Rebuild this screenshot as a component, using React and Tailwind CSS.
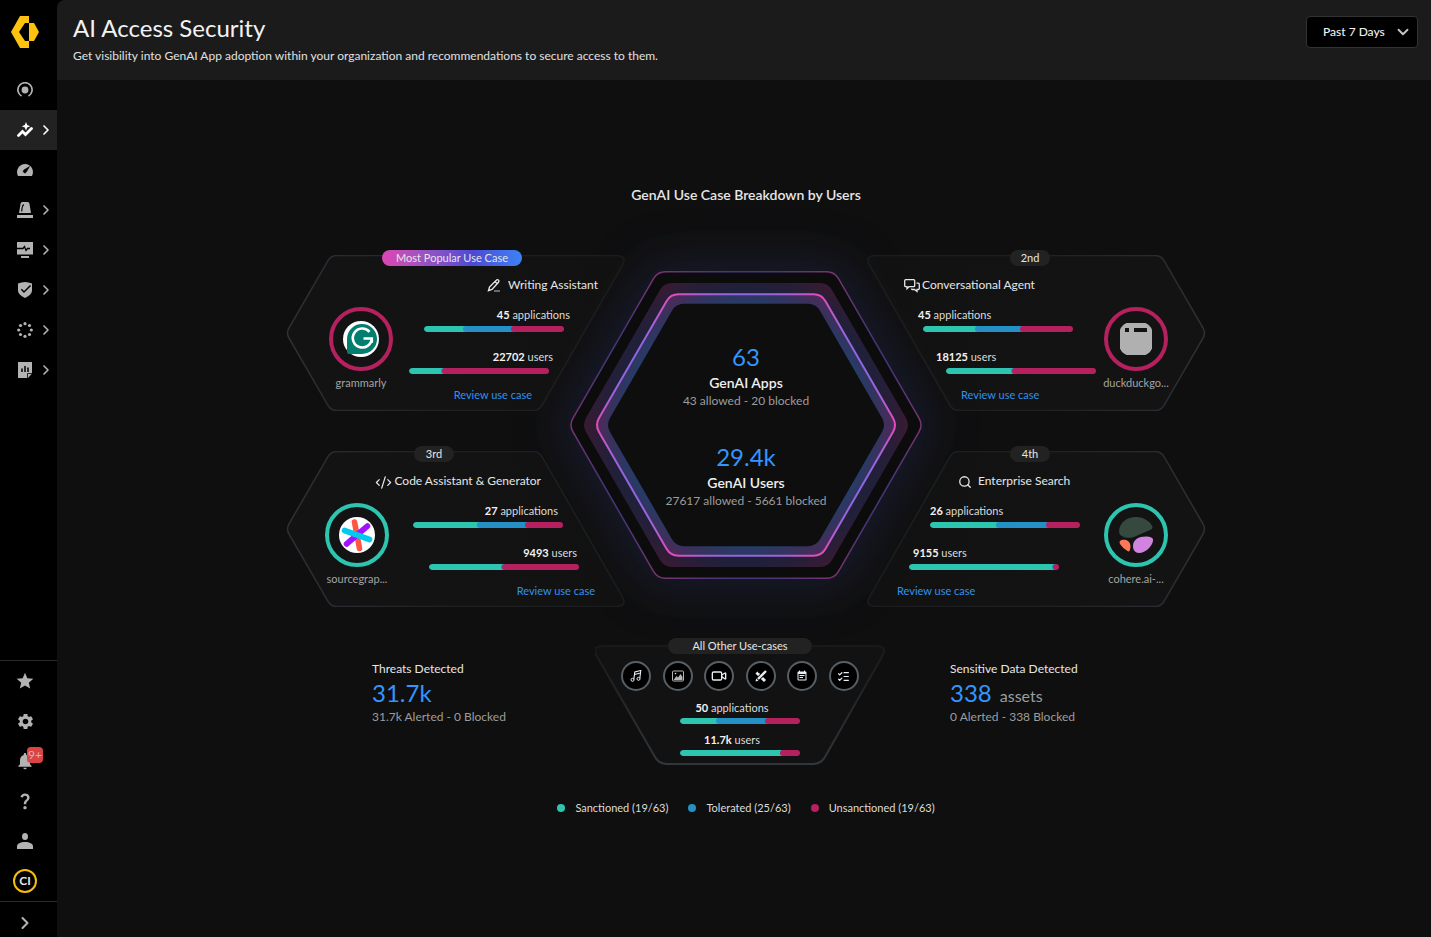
import React, { useState } from "react";
import {
  MdStar,
  MdSettings,
  MdNotifications,
  MdQuestionMark,
  MdEventNote,
} from "react-icons/md";
import {
  ChevronRight,
  ChevronDown,
  CodeXml,
  Search,
  Video,
  ListChecks,
} from "lucide-react";

/* ---------- Sidebar icons ---------- */

const Logo = () => (
  <svg className="w-7 h-8" viewBox="0 0 28 32" fill="#ffc20e">
    <path d="M9 0h9v7h-4L8 16l6 9h4v7H9L0 16z" />
    <path d="M18 7h5l5 9-5 9h-5z" />
  </svg>
);

const RadarIcon = () => (
  <svg className="w-4 h-4" viewBox="0 0 16 16">
    <circle cx="8" cy="8" r="3.4" fill="currentColor" />
    <path d="M4.500 14a7.100 7.100 0 1 1 7 0" fill="none" stroke="currentColor" strokeWidth="1.700" />
  </svg>
);

const InsightsIcon = () => (
  <svg className="w-4 h-4" viewBox="0 0 16 16">
    <path d="M1.500 13.500l4-4 3 3 6-6" fill="none" stroke="currentColor" strokeWidth="2.800" strokeLinecap="round" />
    <path d="M9 0l1.200 3 3 1.200-3 1.200L9 8.400l-1.200-3-3-1.200 3-1.200z" fill="currentColor" />
  </svg>
);

const GaugeIcon = () => (
  <svg className="w-4 h-4" viewBox="0 0 16 16">
    <path d="M8 2a8 8 0 0 0-7.200 11.400c.2.400.5.600 1 .6h12.400c.5 0 .8-.2 1-.6A8 8 0 0 0 8 2z" fill="currentColor" />
    <path d="M12.500 4.500L9.300 10a1.600 1.600 0 1 1-2.400-2z" fill="#000" stroke="#000" strokeWidth=".6" />
  </svg>
);

const AlarmIcon = () => (
  <svg className="w-4 h-4" viewBox="0 0 16 16" fill="currentColor">
    <path d="M2 11L3.500 2C3.700.700 4.300 0 5.500 0h5c1.200 0 1.800.700 2 2L14 11zM0 13h16v3H0z" />
    <path d="M4.800 9.500Q4.800 4 6.800 2.500" fill="none" stroke="#000" strokeWidth="1.100" />
  </svg>
);

const MonitorIcon = () => (
  <svg className="w-4 h-4" viewBox="0 0 16 16" fill="currentColor">
    <path d="M0 0h16v12.500H0zM4 14h8v2H4z" />
    <path d="M0 6.500h6l1.500-2 1.500 4 1.500-2H13" fill="none" stroke="#000" strokeWidth="1.300" />
  </svg>
);

const ShieldIcon = () => (
  <svg className="w-4 h-4" viewBox="0 0 16 16" fill="currentColor">
    <path d="M1 1.500q7-3 14 0v7q0 4-7 7.500-7-3.500-7-7.500z" />
    <path d="M4.300 7.200L7 10l6.500-6.500" fill="none" stroke="#000" strokeWidth="1.500" />
  </svg>
);

const RingIcon = () => (
  <svg className="w-4 h-4" viewBox="0 0 16 16" fill="currentColor">
    <circle cx="8" cy="1.700" r="1.600" />
    <circle cx="12.500" cy="3.500" r="1.600" />
    <circle cx="14.300" cy="8" r="1.600" />
    <circle cx="12.500" cy="12.500" r="1.600" />
    <circle cx="8" cy="14.300" r="1.600" />
    <circle cx="3.500" cy="12.500" r="1.600" />
    <circle cx="1.700" cy="8" r="1.600" />
    <circle cx="3.500" cy="3.500" r="1.600" />
  </svg>
);

const ReportIcon = () => (
  <svg className="w-4 h-4" viewBox="0 0 16 16" fill="currentColor">
    <path d="M1 0h14v11.500L11 16H1z" />
    <path d="M10.500 16v-4.500H15" fill="none" stroke="#000" strokeWidth=".8" />
    <path d="M5 6.500V10M8 4v6M11 5.500V10" stroke="#000" strokeWidth="1.500" />
  </svg>
);

const PersonIcon = () => (
  <svg className="w-4 h-4" viewBox="0 0 16 16" fill="currentColor">
    <ellipse cx="8" cy="3.500" rx="3" ry="3.500" />
    <path d="M0 16v-2.500C0 10.500 3.500 9 8 9s8 1.500 8 4.500V16z" />
  </svg>
);

/* ---------- Use case icons ---------- */

const PencilIcon = () => (
  <svg className="w-4 h-4" viewBox="0 0 16 16" fill="none" stroke="currentColor">
    <path d="M2.500 13.700l1-3.700L10.300 3.200a1.400 1.400 0 0 1 2.200 2L6 12.400z" strokeWidth="1.400" />
    <path d="M9 4.700l2.500 2" strokeWidth="1.400" />
    <path d="M8 14h6" strokeWidth="1.400" opacity=".6" />
  </svg>
);

const ChatIcon = () => (
  <svg className="w-4 h-4" viewBox="0 0 16 16" fill="none" stroke="currentColor" strokeWidth="1.300">
    <path d="M1.700 2.700h8q1 0 1 1v5q0 1-1 1H5L3 11.700v-2H1.700q-1 0-1-1v-5q0-1 1-1z" />
    <path d="M12.500 6.200h1.800q1 0 1 1v4.300q0 1-1 1H13v2l-2.500-2h-2q-1 0-1-1" />
  </svg>
);

const MusicIcon = () => (
  <svg className="w-3 h-3" viewBox="0 0 12 12" fill="none" stroke="currentColor">
    <path d="M3.800 9.500l1-7.500 6-1.500-1 8M4.500 4.500l6-1.500" strokeWidth="1.100" />
    <circle cx="2.500" cy="9.800" r="1.500" />
    <circle cx="8.500" cy="8.800" r="1.500" />
  </svg>
);

const PictureIcon = () => (
  <svg className="w-3 h-3" viewBox="0 0 12 12" fill="none" stroke="currentColor">
    <rect x=".5" y="1" width="11" height="10" rx="1" stroke="#b5b5b5" />
    <path d="M1.500 10l3-4L6 7.500 8.500 4l2 3v3z" fill="#b5b5b5" stroke="none" />
    <circle cx="3.500" cy="3.500" r=".8" fill="currentColor" stroke="none" />
  </svg>
);

const DesignIcon = () => (
  <svg className="w-3 h-3" viewBox="0 0 12 12" fill="none" stroke="currentColor">
    <path d="M1.500 2.500l8.500 8.500" strokeWidth="3" />
    <path d="M3 3l1-1M5 5l1-1M7.500 7.500l1-1" stroke="#000" strokeWidth=".7" />
    <path d="M11 1L2.500 9.500" stroke="#000" strokeWidth="4" />
    <path d="M11 1L3 9" strokeWidth="2.400" />
    <path d="M.500 11.500l.800-3 2.200 2.200z" fill="currentColor" stroke="none" />
  </svg>
);

/* ---------- App logos ---------- */

const GrammarlyLogo = () => (
  <svg className="w-9 h-9" viewBox="0 0 36 36">
    <circle cx="18" cy="18" r="18" fill="#fff" />
    <path d="M19 3A14.800 14.800 0 1 1 19 33H6q-2 0-2-2V18A15 15 0 0 1 19 3z" fill="#027e6f" />
    <path
      d="M26.500 10.800A9.500 9.500 0 1 0 28.800 17.500H20.500M28.800 17.500v4.300"
      fill="none"
      stroke="#fff"
      strokeWidth="2.600"
    />
  </svg>
);

const DuckLogo = () => (
  <svg className="w-8 h-8" viewBox="0 0 32 32">
    <path d="M6.500 0h19Q30 2 32 6.500v19Q30 30 25.500 32h-19Q2 30 0 25.500v-19Q2 2 6.500 0z" fill="#b0b0b0" />
    <path d="M5 5h4v4H5zM14 5h13v4H14z" fill="#121212" />
  </svg>
);

const SourcegraphLogo = () => (
  <svg className="w-9 h-9" viewBox="0 0 36 36">
    <circle cx="18" cy="18" r="18" fill="#fff" />
    <g fill="none" strokeWidth="5.600" strokeLinecap="round">
      <path d="M15.500 5l5 26.500" stroke="#ff5543" />
      <path d="M28.500 9L7.500 27" stroke="#a112ff" />
      <path d="M5.500 13.500l25 9" stroke="#00cbec" />
    </g>
  </svg>
);

const CohereLogo = () => (
  <svg className="w-9 h-9" viewBox="0 0 36 36">
    <path d="M1 14C2 5 9 0 18 0c8 0 15 5 16.500 10 .3 1.500-1 2.500-2.500 3l-15 6.500c-3 1.300-7 2-11 .5C2.500 19 1 17 1 14z" fill="#35493f" />
    <path d="M2 24c2-2 6-1.500 8 0 3 2 3 7 1.500 10-.8 1-2 0-3-.7C5 31 0 26 2 24z" fill="#ff7759" />
    <path d="M15 29c0-7 7-10 14-9.500 5 .3 6.500 2 6 4.500-1 5-7 12-14 12-4 0-6-3-6-7z" fill="#d084df" />
  </svg>
);

/* ---------- Shapes ---------- */

// closed polygon path with every corner rounded by its own radius
const roundedPath = (points) => {
  const n = points.length;
  const towards = (a, b, r) => {
    const len = Math.hypot(b[0] - a[0], b[1] - a[1]);
    return [a[0] + ((b[0] - a[0]) * r) / len, a[1] + ((b[1] - a[1]) * r) / len];
  };
  return (
    points
      .map((p, i) => {
        const start = towards(p, points[(i + n - 1) % n], p[2]);
        const end = towards(p, points[(i + 1) % n], p[2]);
        return `${i === 0 ? "M" : "L"}${start.join(" ")}Q${p[0]} ${p[1]} ${end.join(" ")}`;
      })
      .join("") + "Z"
  );
};

const cardPath = roundedPath([
  [0, 78, 6],
  [45, 0.5, 6],
  [342, 0.5, 12],
  [253, 155.5, 6],
  [45, 155.5, 6],
]);

const otherPath = roundedPath([
  [-4, 1, 12],
  [293, 1, 12],
  [226, 119, 8],
  [64, 119, 8],
]);

const hexPath = (r, corner) => {
  const h = r * 0.866;
  return roundedPath([
    [-r, 0, corner],
    [-r / 2, -h, corner],
    [r / 2, -h, corner],
    [r, 0, corner],
    [r / 2, h, corner],
    [-r / 2, h, corner],
  ]);
};

const CardShape = ({ flip }) => (
  <svg className={`absolute inset-0 w-full h-full ${flip}`} viewBox="0 0 340 156" fill="none">
    <defs>
      <linearGradient id="cardStroke" x1="0" y1="0" x2="1" y2="0">
        <stop offset="0" stopColor="#2c3136" />
        <stop offset=".5" stopColor="#1e2022" />
        <stop offset="1" stopColor="#1b1c1e" />
      </linearGradient>
      <linearGradient id="cardFill" x1="0" y1="0" x2="1" y2="0">
        <stop offset="0.4" stopColor="#131313" />
        <stop offset="1" stopColor="#131313" stopOpacity=".6" />
      </linearGradient>
    </defs>
    <path d={cardPath} fill="url(#cardFill)" stroke="url(#cardStroke)" strokeWidth="1.500" />
  </svg>
);

const Hexagon = () => (
  <svg
    className="absolute left-1/2 top-[-70px] w-[480px] h-[480px] -translate-x-1/2 overflow-visible"
    viewBox="-240 -240 480 480"
    fill="none"
  >
    <defs>
      <radialGradient id="hexLine" gradientUnits="userSpaceOnUse" cx="0" cy="0" r="152">
        <stop offset=".84" stopColor="#8069e4" />
        <stop offset=".9" stopColor="#a562d6" />
        <stop offset="1" stopColor="#ee48b4" />
      </radialGradient>
      <radialGradient id="hexOuter" gradientUnits="userSpaceOnUse" cx="0" cy="0" r="176">
        <stop offset=".86" stopColor="#41377a" />
        <stop offset="1" stopColor="#7d3270" />
      </radialGradient>
      <radialGradient id="hexBand" gradientUnits="userSpaceOnUse" cx="0" cy="0" r="164">
        <stop offset=".74" stopColor="#263c68" />
        <stop offset=".8" stopColor="#32345f" />
        <stop offset=".93" stopColor="#542757" />
      </radialGradient>
      <radialGradient id="hexBandOuter" gradientUnits="userSpaceOnUse" cx="0" cy="0" r="164">
        <stop offset=".84" stopColor="#20203a" />
        <stop offset="1" stopColor="#3b1a32" />
      </radialGradient>
      <filter id="glow" x="-50%" y="-50%" width="200%" height="200%">
        <feGaussianBlur stdDeviation="24" />
      </filter>
    </defs>
    <path d={hexPath(190, 10)} fill="#22264a" opacity=".5" filter="url(#glow)" />
    <path d={hexPath(177, 8)} fill="#0c0c0d" stroke="url(#hexOuter)" strokeWidth="1.500" />
    <path d={hexPath(164, 8)} fill="url(#hexBandOuter)" />
    <path d={hexPath(151, 8)} fill="url(#hexBand)" stroke="url(#hexLine)" strokeWidth="2" />
    <path d={hexPath(140, 8)} fill="#0e0e0e" />
  </svg>
);

const Bar = ({ parts, className }) => {
  const colors = ["bg-[#2dc5b0]", "bg-[#2490c5]", "bg-[#b5205f]"];
  const total = parts.reduce((a, b) => a + b, 0);

  return (
    <div className={`flex h-1.5 rounded-full overflow-hidden ${className}`}>
      {parts.map((part, i) => (
        <div
          key={i}
          className={`shrink-0 rounded-l-full ${colors[i]} ${i > 0 ? "-ml-[3px]" : ""}`}
          style={{ width: `calc(${(part / total) * 100}% + 3px)` }}
        />
      ))}
    </div>
  );
};

const Count = ({ value, unit, className }) => (
  <p className={`text-[11px] leading-4 text-[#dcdcdc] ${className}`}>
    <span className="font-bold text-[#f2f2f2]">{value}</span> {unit}
  </p>
);

/* ---------- Use case cards ---------- */

const useCases = [
  {
    rank: "Most Popular Use Case",
    badge: "w-[140px] left-24 bg-linear-to-r from-[#dc46b2] via-[#4b49d4] via-65% to-[#3b82f6]",
    title: "Writing Assistant",
    icon: <PencilIcon />,
    apps: "45",
    appParts: [39, 48, 53],
    users: "22702",
    userParts: [32, 1, 107],
    bar: "w-[140px]",
    app: "grammarly",
    logo: <GrammarlyLogo />,
    ring: "border-[#b5205f]",
    right: false,
    flip: "",
    avatar: "ml-[43px]",
    gaps: ["mr-7 gap-1.5", "mr-14", "mr-[62px]", "mr-[73px]", "mr-[77px]", "mr-[94px]"],
  },
  {
    rank: "2nd",
    badge: "w-10 left-36 bg-[#222]",
    title: "Conversational Agent",
    icon: <ChatIcon />,
    apps: "45",
    appParts: [52, 45, 53],
    users: "18125",
    userParts: [65, 1, 84],
    bar: "w-[150px]",
    app: "duckduckgo...",
    logo: <DuckLogo />,
    ring: "border-[#b5205f]",
    right: true,
    flip: "-scale-x-100",
    avatar: "mr-[38px]",
    gaps: ["ml-[38px] gap-0.5", "ml-[52px]", "ml-[57px]", "ml-[70px]", "ml-20", "ml-[95px]"],
  },
  {
    rank: "3rd",
    badge: "w-10 left-32 bg-[#222]",
    title: "Code Assistant & Generator",
    icon: <CodeXml className="mt-0.5" size={17} strokeWidth={1.8} />,
    apps: "27",
    appParts: [64, 48, 38],
    users: "9493",
    userParts: [72, 1, 77],
    bar: "w-[150px]",
    app: "sourcegrap...",
    logo: <SourcegraphLogo />,
    ring: "border-[#2dc5b0]",
    right: false,
    flip: "-scale-y-100",
    avatar: "ml-[39px]",
    gaps: ["mr-[85px] gap-0.5", "mr-[68px]", "mr-[63px]", "mr-[49px]", "mr-[47px]", "mr-[31px]"],
  },
  {
    rank: "4th",
    badge: "w-10 left-36 bg-[#222]",
    title: "Enterprise Search",
    icon: <Search className="mt-0.5" size={14} strokeWidth={2.2} />,
    apps: "26",
    appParts: [66, 50, 34],
    users: "9155",
    userParts: [143, 1, 6],
    bar: "w-[150px]",
    app: "cohere.ai-...",
    logo: <CohereLogo />,
    ring: "border-[#2dc5b0]",
    right: true,
    flip: "-scale-100",
    avatar: "mr-[38px]",
    gaps: ["ml-[92px] gap-1.5", "ml-16", "ml-16", "ml-[47px]", "ml-[43px]", "ml-[31px]"],
  },
];

const UseCaseCard = ({ item }) => {
  const [title, apps, appBar, users, userBar, link] = item.gaps;

  return (
    <section className="relative h-[156px]">
      <CardShape flip={item.flip} />
      <span
        className={`absolute -top-[5px] h-4 rounded-full text-center text-[11px] leading-4 text-[#e6e6e6] ${item.badge}`}
      >
        {item.rank}
      </span>

      <div className={`relative flex flex-col pt-5 ${item.right ? "items-start" : "items-end"}`}>
        <div className={`flex items-center h-5 text-[#e6e6e6] ${title}`}>
          {item.icon}
          <h3 className="text-[12px] leading-5">{item.title}</h3>
        </div>

        <div className={`mt-3 w-full flex ${item.right ? "flex-row-reverse" : ""}`}>
          <div className={`w-16 shrink-0 flex flex-col items-center ${item.avatar}`}>
            <div className={`w-16 h-16 rounded-full border-4 flex items-center justify-center ${item.ring}`}>
              {item.logo}
            </div>
            <p className="mt-1 text-[11px] leading-4 text-[#a3a3a3] whitespace-nowrap">{item.app}</p>
          </div>

          <div className={`flex-1 flex flex-col ${item.right ? "items-start" : "items-end"}`}>
            <Count value={item.apps} unit="applications" className={apps} />
            <Bar parts={item.appParts} className={`mt-[3px] ${item.bar} ${appBar}`} />
            <Count value={item.users} unit="users" className={`mt-[17px] ${users}`} />
            <Bar parts={item.userParts} className={`mt-[3px] ${item.bar} ${userBar}`} />
            <a href="#review" className={`mt-[13px] text-[11px] leading-4 text-[#3091ee] ${link}`}>
              Review use case
            </a>
          </div>
        </div>
      </div>
    </section>
  );
};

const CenterStat = ({ value, label, detail }) => (
  <div className="flex flex-col items-center whitespace-nowrap">
    <p className="text-2xl leading-8 text-[#3395ff]">{value}</p>
    <p className="text-[14px] leading-5 font-semibold text-[#f0f0f0]">{label}</p>
    <p className="text-[12px] leading-4 text-[#9d9d9d]">{detail}</p>
  </div>
);

const otherIcons = [
  <MusicIcon />,
  <PictureIcon />,
  <Video size={16} strokeWidth={2} />,
  <DesignIcon />,
  <MdEventNote size={12} />,
  <ListChecks size={13} strokeWidth={2.2} />,
];

const OtherUseCases = () => (
  <section className="relative w-[290px] h-[120px] flex flex-col items-center pt-4">
    <svg className="absolute inset-0 w-full h-full" viewBox="0 0 290 120">
      <defs>
        <linearGradient id="otherStroke" x1="0" y1="0" x2="0" y2="1">
          <stop offset="0" stopColor="#19191a" />
          <stop offset="1" stopColor="#30363b" />
        </linearGradient>
      </defs>
      <path d={otherPath} fill="#121212" stroke="url(#otherStroke)" strokeWidth="2" />
    </svg>
    <h3 className="absolute -top-[7px] w-36 h-4 rounded-full bg-[#222] text-center text-[11px] leading-4 text-[#e6e6e6]">
      All Other Use-cases
    </h3>
    <div className="relative flex justify-between w-[238px]">
      {otherIcons.map((icon, i) => (
        <span
          key={i}
          className="w-[30px] h-[30px] rounded-full border-2 border-[#565f66] bg-black text-[#e8eef2] flex items-center justify-center"
        >
          {icon}
        </span>
      ))}
    </div>
    <Count value="50" unit="applications" className="relative mt-[9px] pr-4" />
    <Bar parts={[36, 49, 35]} className="relative mt-0.5 w-[120px]" />
    <Count value="11.7k" unit="users" className="relative mt-2 pr-4" />
    <Bar parts={[100, 0, 20]} className="relative mt-0.5 w-[120px]" />
  </section>
);

const Detected = ({ title, value, unit, detail, className }) => (
  <div className={`pt-3.5 text-[#9d9d9d] whitespace-nowrap ${className}`}>
    <h3 className="text-[12px] leading-5 text-[#e6e6e6]">{title}</h3>
    <p className="h-7 text-2xl leading-7">
      <span className="text-[#3395ff]">{value}</span>
      {unit && <span className="ml-2 text-base leading-7">{unit}</span>}
    </p>
    <p className="text-[12px] leading-5">{detail}</p>
  </div>
);

/* ---------- Layout ---------- */

const topItems = [
  { label: "Command Center", icon: <RadarIcon /> },
  { label: "Insights", icon: <InsightsIcon />, more: true, active: true },
  { label: "Dashboards", icon: <GaugeIcon /> },
  { label: "Incidents and Alerts", icon: <AlarmIcon />, more: true },
  { label: "Monitor", icon: <MonitorIcon />, more: true },
  { label: "Manage", icon: <ShieldIcon />, more: true },
  { label: "Workflows", icon: <RingIcon />, more: true },
  { label: "Reports", icon: <ReportIcon />, more: true },
];

const bottomItems = [
  { label: "Favorites", icon: <MdStar size={20} /> },
  { label: "Settings", icon: <MdSettings size={19} /> },
  { label: "Notifications", icon: <MdNotifications size={20} />, badge: "9+" },
  { label: "Help", icon: <MdQuestionMark size={20} /> },
  { label: "Account", icon: <PersonIcon /> },
];

const NavItem = ({ item }) => (
  <a
    href="#nav"
    aria-label={item.label}
    className={`relative flex items-center h-10 pl-[13px] ${
      item.active ? "bg-[#222] text-white" : "text-[#b3b3b3]"
    }`}
  >
    <span className="w-6 flex justify-center">{item.icon}</span>
    {item.more && <ChevronRight className="ml-px" size={16} strokeWidth={2.5} />}
    {item.badge && (
      <span className="absolute left-[27px] top-1.5 w-4 h-4 rounded-sm bg-[#dc4444] text-center text-[12px] leading-4 text-[#d8b0b0]">
        {item.badge}
      </span>
    )}
  </a>
);

const Sidebar = () => (
  <aside className="w-[57px] shrink-0 bg-black flex flex-col">
    <div className="pt-4 pl-[11px] h-[70px]">
      <Logo />
    </div>
    <nav>
      {topItems.map((item) => (
        <NavItem key={item.label} item={item} />
      ))}
    </nav>
    <div className="mt-auto border-t border-[#2a2a2a]">
      {bottomItems.map((item) => (
        <NavItem key={item.label} item={item} />
      ))}
      <div className="h-10 pl-[13px] flex items-center">
        <button className="w-6 h-6 rounded-full border-2 border-[#f5bd0c] text-[12px] leading-5 font-bold text-[#e6e6e6]">
          CI
        </button>
      </div>
    </div>
    <button
      aria-label="Expand menu"
      className="h-9 pt-1.5 pl-[15px] flex items-center border-t border-[#2a2a2a] text-[#b3b3b3]"
    >
      <ChevronRight size={20} strokeWidth={2.5} />
    </button>
  </aside>
);

const legend = [
  { label: "Sanctioned (19/63)", color: "bg-[#2dc5b0]" },
  { label: "Tolerated (25/63)", color: "bg-[#2490c5]" },
  { label: "Unsanctioned (19/63)", color: "bg-[#b5205f]" },
];

const App = () => {
  const [range, setRange] = useState("Past 7 Days");

  return (
    <div className="min-h-screen flex bg-black font-['Lato',sans-serif]">
      <Sidebar />

      <div className="flex-1 flex flex-col bg-[#0f0f0f] rounded-tl-lg overflow-hidden">
        <header className="h-20 pl-4 pr-[13px] flex items-start justify-between bg-[#1b1b1b]">
          <div className="pt-3">
            <h1 className="text-2xl leading-8 text-[#f2f2f2]">AI Access Security</h1>
            <p className="mt-0.5 text-[12px] leading-5 text-[#e0e0e0]">
              Get visibility into GenAI App adoption within your organization and recommendations to
              secure access to them.
            </p>
          </div>
          <div className="relative mt-4">
            <select
              aria-label="Time range"
              value={range}
              onChange={(e) => setRange(e.target.value)}
              className="appearance-none w-28 h-8 pl-4 rounded border border-[#333] bg-black text-[12px] font-medium text-[#f0f0f0]"
            >
              <option>Past 7 Days</option>
              <option>Past 30 Days</option>
            </select>
            <ChevronDown
              className="absolute right-1.5 top-[7px] text-[#c4c4c4] pointer-events-none"
              size={18}
              strokeWidth={2.5}
            />
          </div>
        </header>

        <main className="flex-1 flex flex-col items-center justify-center pl-1">
          <h2 className="text-[14px] leading-5 font-semibold text-[#e6e6e6]">
            GenAI Use Case Breakdown by Users
          </h2>

          <div className="relative mt-[50px] grid grid-cols-[340px_240px_340px] gap-y-10">
            <Hexagon />
            <UseCaseCard item={useCases[0]} />
            <div className="relative row-span-2 flex flex-col items-center gap-8 pt-[86px]">
              <CenterStat value="63" label="GenAI Apps" detail="43 allowed - 20 blocked" />
              <CenterStat value="29.4k" label="GenAI Users" detail="27617 allowed - 5661 blocked" />
            </div>
            {useCases.slice(1).map((item) => (
              <UseCaseCard key={item.rank} item={item} />
            ))}
          </div>

          <div className="mt-[38px] w-[920px] pl-[86px] flex">
            <Detected
              className="w-[223px]"
              title="Threats Detected"
              value="31.7k"
              detail="31.7k Alerted - 0 Blocked"
            />
            <OtherUseCases />
            <Detected
              className="ml-[65px]"
              title="Sensitive Data Detected"
              value="338"
              unit="assets"
              detail="0 Alerted - 338 Blocked"
            />
          </div>

          <ul className="mt-[35px] mb-4 flex gap-5">
            {legend.map((item) => (
              <li key={item.label} className="flex items-center gap-2.5 text-[11px] leading-4 text-[#dcdcdc]">
                <span className={`w-2 h-2 rounded-full ${item.color}`} />
                {item.label}
              </li>
            ))}
          </ul>
        </main>
      </div>
    </div>
  );
};

export default App;
